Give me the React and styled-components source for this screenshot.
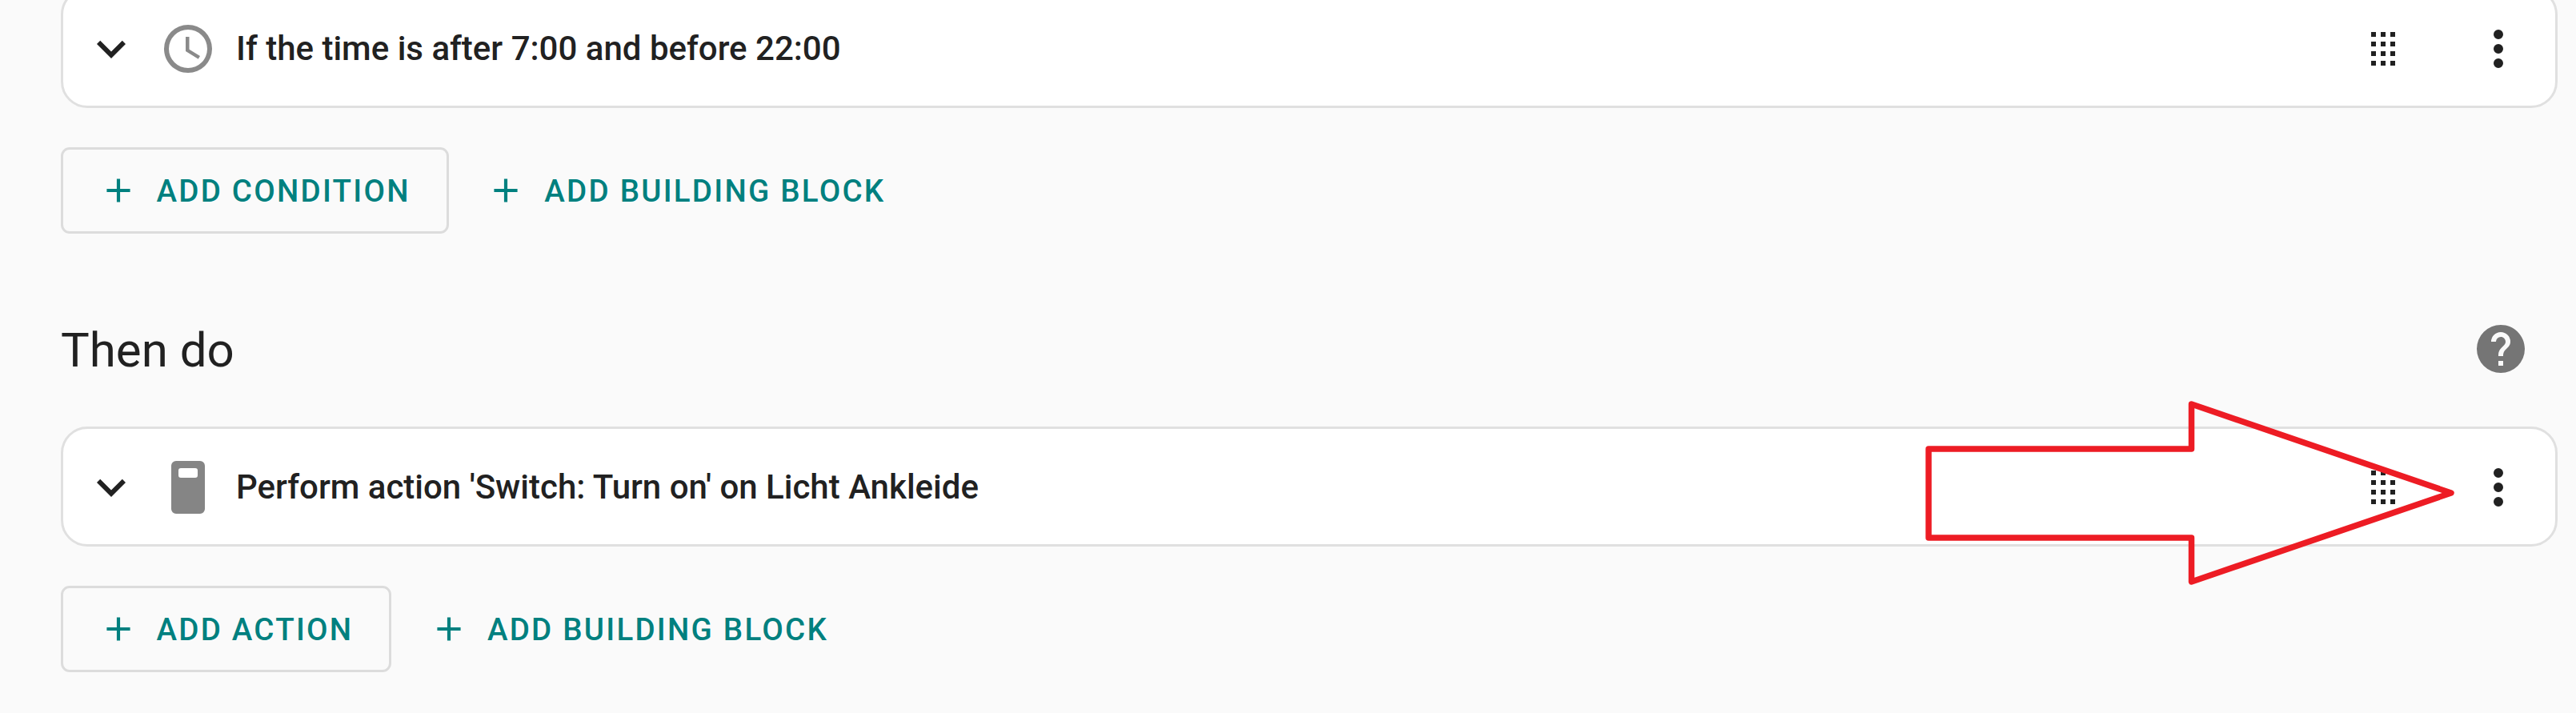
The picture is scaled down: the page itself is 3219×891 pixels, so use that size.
import React from "react";
import styled, { createGlobalStyle } from "styled-components";

const GlobalStyle = createGlobalStyle`
  html, body {
    margin: 0;
    padding: 0;
    background: #fafafa;
    overflow: hidden;
  }
`;

const Page = styled.div`
  position: relative;
  box-sizing: border-box;
  width: 3219px;
  height: 891px;
  padding: 0 23px 0 76px;
  overflow: hidden;
  background: #fafafa;
  font-family: Roboto, "Liberation Sans", sans-serif;
  color: #212121;
`;

const Card = styled.div`
  box-sizing: border-box;
  display: flex;
  align-items: center;
  height: 150px;
  padding: 2px 35px 0 24px;
  margin-top: ${(p) => p.$top || 0}px;
  background: #fff;
  border: 3px solid #e0e0e0;
  border-radius: 33px;
`;

const Icon = styled.svg`
  display: block;
  flex: none;
  width: ${(p) => p.$size || 72}px;
  height: ${(p) => p.$size || 72}px;
  fill: ${(p) => p.$color || "#212121"};
`;

const LeadIcon = styled(Icon)`
  margin-left: 24px;
`;

const CardTitle = styled.div`
  flex: 1;
  margin-left: 24px;
  font-size: 42px;
  font-weight: 500;
  line-height: 1;
  white-space: nowrap;
`;

const Actions = styled.div`
  display: flex;
  align-items: center;
  gap: 72px;
`;

const ButtonRow = styled.div`
  display: flex;
  align-items: center;
  margin-top: 49px;
`;

const Button = styled.div`
  box-sizing: border-box;
  display: flex;
  align-items: center;
  gap: 23px;
  height: 108px;
  padding: 0 45px 0 43.5px;
  border: 3px solid ${(p) => (p.$outlined ? "#dcdcdc" : "transparent")};
  border-radius: 11px;
  color: #00807f;
  font-size: 38.5px;
  font-weight: 500;
  letter-spacing: 2.25px;
  white-space: nowrap;
`;

const SectionHeader = styled.div`
  display: flex;
  align-items: center;
  justify-content: space-between;
  height: 72px;
  margin-top: 108px;
  padding-right: 35px;
`;

const SectionTitle = styled.h2`
  margin: 3px 0 0;
  font-size: 60px;
  font-weight: 400;
  line-height: 1;
`;

const Annotation = styled.svg`
  position: absolute;
  left: 0;
  top: 0;
  width: 3219px;
  height: 891px;
  pointer-events: none;
`;

const paths = {
  chevron: "M7.41,8.58L12,13.17L16.59,8.58L18,10L12,16L6,10L7.41,8.58Z",
  clock:
    "M12,20A8,8 0 0,0 20,12A8,8 0 0,0 12,4A8,8 0 0,0 4,12A8,8 0 0,0 12,20M12,2A10,10 0 0,1 22,12A10,10 0 0,1 12,22C6.47,22 2,17.5 2,12A10,10 0 0,1 12,2M12.5,7V12.25L17,15L16.25,16.23L11,13V7H12.5Z",
  drag:
    "M7,19V17H9V19H7M11,19V17H13V19H11M15,19V17H17V19H15M7,15V13H9V15H7M11,15V13H13V15H11M15,15V13H17V15H15M7,11V9H9V11H7M11,11V9H13V11H11M15,11V9H17V11H15M7,7V5H9V7H7M11,7V5H13V7H11M15,7V5H17V7H15Z",
  dots:
    "M12,16A2,2 0 0,1 14,18A2,2 0 0,1 12,20A2,2 0 0,1 10,18A2,2 0 0,1 12,16M12,10A2,2 0 0,1 14,12A2,2 0 0,1 12,14A2,2 0 0,1 10,12A2,2 0 0,1 12,10M12,4A2,2 0 0,1 14,6A2,2 0 0,1 12,8A2,2 0 0,1 10,6A2,2 0 0,1 12,4Z",
  plus: "M19,13H13V19H11V13H5V11H11V5H13V11H19V13Z",
  help:
    "M15.07,11.25L14.17,12.17C13.45,12.89 13,13.5 13,15H11V14.5C11,13.39 11.45,12.39 12.17,11.67L13.41,10.41C13.78,10.05 14,9.55 14,9C14,7.89 13.1,7 12,7A2,2 0 0,0 10,9H8A4,4 0 0,1 12,5A4,4 0 0,1 16,9C16,9.88 15.64,10.67 15.07,11.25M13,19H11V17H13M12,2A10,10 0 0,0 2,12A10,10 0 0,0 12,22A10,10 0 0,0 22,12C22,6.47 17.5,2 12,2Z",
};

function Mdi({ name, as, size, color }) {
  const Comp = as || Icon;
  return (
    <Comp viewBox="0 0 24 24" $size={size} $color={color}>
      <path d={paths[name]} />
    </Comp>
  );
}

function SwitchIcon() {
  return (
    <LeadIcon viewBox="0 0 72 72" $color="#858585">
      <path
        fillRule="evenodd"
        d="M21 3H51A6 6 0 0 1 57 9V63A6 6 0 0 1 51 69H21A6 6 0 0 1 15 63V9A6 6 0 0 1 21 3ZM27 12A3 3 0 0 0 24 15V21A3 3 0 0 0 27 24H45A3 3 0 0 0 48 21V15A3 3 0 0 0 45 12Z"
      />
    </LeadIcon>
  );
}

function Row({ icon, title, top }) {
  return (
    <Card $top={top}>
      <Mdi name="chevron" />
      {icon}
      <CardTitle>{title}</CardTitle>
      <Actions>
        <Mdi name="drag" />
        <Mdi name="dots" />
      </Actions>
    </Card>
  );
}

function AddButton({ outlined, children }) {
  return (
    <Button $outlined={outlined}>
      <Mdi name="plus" size={50} color="#00807f" />
      {children}
    </Button>
  );
}

export default function App() {
  return (
    <Page>
      <GlobalStyle />
      <Row
        top={-15}
        icon={<Mdi name="clock" as={LeadIcon} color="#8a8a8a" />}
        title="If the time is after 7:00 and before 22:00"
      />
      <ButtonRow>
        <AddButton outlined>ADD CONDITION</AddButton>
        <AddButton>ADD BUILDING BLOCK</AddButton>
      </ButtonRow>

      <SectionHeader>
        <SectionTitle>Then do</SectionTitle>
        <Mdi name="help" color="#757575" />
      </SectionHeader>

      <Row
        top={61}
        icon={<SwitchIcon />}
        title="Perform action 'Switch: Turn on' on Licht Ankleide"
      />
      <ButtonRow>
        <AddButton outlined>ADD ACTION</AddButton>
        <AddButton>ADD BUILDING BLOCK</AddButton>
      </ButtonRow>

      {/* red arrow drawn on top of the screenshot */}
      <Annotation viewBox="0 0 3219 891">
        <path
          d="M2410 561H2738.5V505L3063 616L2738.5 727V672H2410Z"
          fill="none"
          stroke="#ed1c24"
          strokeWidth="7.5"
          strokeLinejoin="round"
        />
      </Annotation>
    </Page>
  );
}
